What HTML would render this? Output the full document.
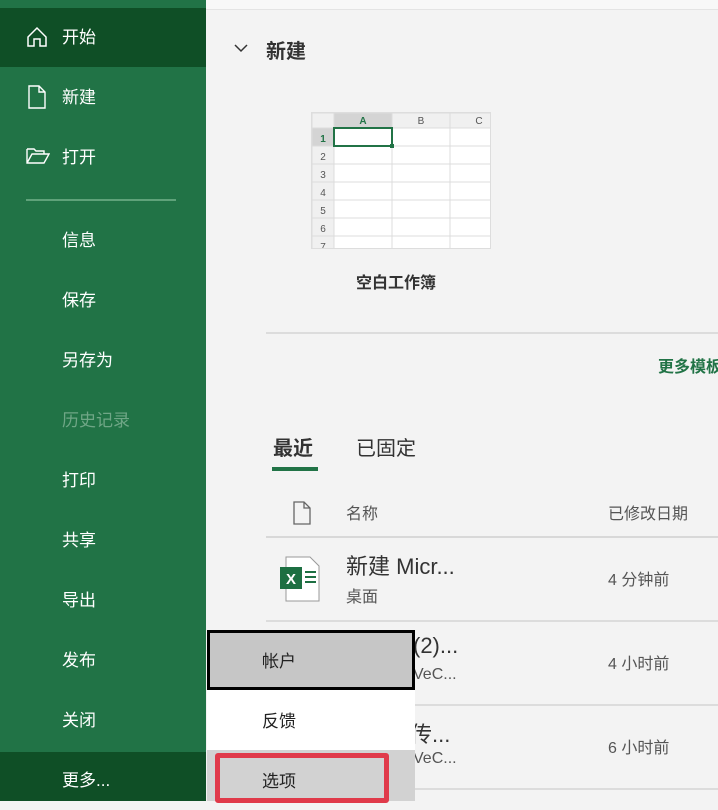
<!DOCTYPE html>
<html><head><meta charset="utf-8"><style>
*{margin:0;padding:0;box-sizing:border-box}
body{width:718px;height:801px;overflow:hidden;background:#f3f3f3;font-family:"Liberation Sans","Noto Sans CJK SC",sans-serif;position:relative}
.side{position:absolute;left:0;top:0;width:206px;height:801px;background:#217346}
.it{position:absolute;left:0;width:206px;height:60px;color:#fff;font-size:17px;line-height:62px;padding-left:62px}
.dark{background:#0f4f26}
.ic{position:absolute;left:26px;top:18px}
.a{position:absolute}
</style></head><body>
<div class="a" style="left:206px;top:0;width:512px;height:10px;background:#f8f8f8;border-bottom:1px solid #e4e4e4"></div>
<div class="side">
<div class="it dark" style="top:8px;height:59px;line-height:59px"><svg class="ic" width="22" height="22" viewBox="0 0 22 22" fill="none" stroke="#fff" stroke-width="1.5"><path d="M2 11L11 2L20 11V20H14V13H8V20H2Z"/></svg>开始</div>
<div class="it" style="top:67px"><svg class="ic" width="22" height="24" viewBox="0 0 22 24" fill="none" stroke="#fff" stroke-width="1.4"><path d="M3 1H13L19 7V23H3Z M13 1V7H19"/></svg>新建</div>
<div class="it" style="top:127px"><svg class="ic" width="24" height="22" viewBox="0 0 24 22" fill="none" stroke="#fff" stroke-width="1.4"><path d="M1 4H8L10 6H18V9 M1 4V18H18L23 9H6L1 18"/></svg>打开</div>
<div class="a" style="left:26px;top:199px;width:150px;height:2px;background:#5fa27a"></div>
<div class="it" style="top:210px">信息</div>
<div class="it" style="top:270px">保存</div>
<div class="it" style="top:330px">另存为</div>
<div class="it" style="top:390px;color:#6fa686">历史记录</div>
<div class="it" style="top:450px">打印</div>
<div class="it" style="top:510px">共享</div>
<div class="it" style="top:570px">导出</div>
<div class="it" style="top:630px">发布</div>
<div class="it" style="top:690px">关闭</div>
<div class="it dark" style="top:752px;height:49px;line-height:58px">更多...</div>
</div>
<svg class="a" style="left:233px;top:42px" width="16" height="12" viewBox="0 0 16 12" fill="none" stroke="#333" stroke-width="1.5"><path d="M2 3L8 9L14 3"/></svg>
<div class="a" style="left:266px;top:35px;font-size:20px;font-weight:bold;color:#333">新建</div>
<div class="a" style="left:311px;top:112px;width:180px;height:137px;background:#fff;border:1px solid #ddd;overflow:hidden">
<svg width="180" height="137" viewBox="0 0 180 137"><g stroke="#dcdcdc" fill="none">
<rect x="0" y="0" width="22" height="137" fill="#f0f0f0"/><rect x="0" y="0" width="180" height="15" fill="#f0f0f0"/><rect x="22" y="0" width="58" height="15" fill="#d4d4d4"/><rect x="0" y="15" width="22" height="18" fill="#d4d4d4"/>
<path d="M22 0V137M80 0V137M138 0V137M0 15H180M0 33H180M0 51H180M0 69H180M0 87H180M0 105H180M0 123H180"/></g>
<rect x="22" y="15" width="58" height="18" fill="none" stroke="#217346" stroke-width="2"/><rect x="78" y="31" width="4" height="4" fill="#217346"/>
<g font-size="10" fill="#555" text-anchor="middle" font-family="Liberation Sans"><text x="51" y="11" fill="#217346" font-weight="bold">A</text><text x="109" y="11">B</text><text x="167" y="11">C</text><text x="11" y="29" fill="#217346" font-weight="bold">1</text><text x="11" y="47">2</text><text x="11" y="65">3</text><text x="11" y="83">4</text><text x="11" y="101">5</text><text x="11" y="119">6</text><text x="11" y="137">7</text></g></svg></div>
<div class="a" style="left:356px;top:269px;font-size:16px;font-weight:bold;color:#333">空白工作簿</div>
<div class="a" style="left:266px;top:332px;width:452px;height:2px;background:#dcdcdc"></div>
<div class="a" style="left:658px;top:353px;font-size:16px;font-weight:bold;color:#217346;white-space:nowrap">更多模板</div>
<div class="a" style="left:273px;top:432px;font-size:20px;font-weight:bold;color:#333">最近</div>
<div class="a" style="left:272px;top:467px;width:46px;height:4px;background:#217346"></div>
<div class="a" style="left:356px;top:432px;font-size:20px;color:#333">已固定</div>
<svg class="a" style="left:292px;top:501px" width="20" height="24" viewBox="0 0 20 24" fill="none" stroke="#666" stroke-width="1.3"><path d="M2 1H12L18 7V23H2Z M12 1V7H18"/></svg>
<div class="a" style="left:346px;top:500px;font-size:16px;color:#555">名称</div>
<div class="a" style="left:608px;top:500px;font-size:16px;color:#555">已修改日期</div>
<div class="a" style="left:266px;top:536px;width:452px;height:2px;background:#d8d8d8"></div>
<svg class="a" style="left:280px;top:556px" width="40" height="46" viewBox="0 0 40 46"><path d="M6 1H30L39 10V45H6Z" fill="#fff" stroke="#999"/><rect x="0" y="11" width="22" height="22" fill="#1d6f42"/><text x="11" y="28" fill="#fff" font-size="15" font-weight="bold" text-anchor="middle" font-family="Liberation Sans">X</text><path d="M25 16H36M25 21H36M25 26H36" stroke="#1d6f42" stroke-width="2"/></svg>
<div class="a" style="left:346px;top:549px;font-size:22px;color:#333">新建 Micr...</div>
<div class="a" style="left:346px;top:583px;font-size:16px;color:#555">桌面</div>
<div class="a" style="left:608px;top:566px;font-size:16px;color:#555">4 分钟前</div>
<div class="a" style="left:266px;top:620px;width:452px;height:2px;background:#dcdcdc"></div>
<div class="a" style="left:413px;top:633px;font-size:22px;color:#333">(2)...</div>
<div class="a" style="left:413px;top:666px;font-size:16px;color:#555">VeC...</div>
<div class="a" style="left:608px;top:650px;font-size:16px;color:#555">4 小时前</div>
<div class="a" style="left:266px;top:704px;width:452px;height:2px;background:#dcdcdc"></div>
<div class="a" style="left:410px;top:717px;font-size:22px;color:#333">传...</div>
<div class="a" style="left:413px;top:750px;font-size:16px;color:#555">VeC...</div>
<div class="a" style="left:608px;top:734px;font-size:16px;color:#555">6 小时前</div>
<div class="a" style="left:266px;top:788px;width:452px;height:2px;background:#dcdcdc"></div>
<div class="a" style="left:207px;top:630px;width:208px;height:171px;background:#fff"></div>
<div class="a" style="left:207px;top:630px;width:208px;height:60px;background:#c6c6c6;border:3px solid #000"></div>
<div class="a" style="left:262px;top:647px;font-size:17px;color:#222">帐户</div>
<div class="a" style="left:262px;top:707px;font-size:17px;color:#222">反馈</div>
<div class="a" style="left:207px;top:750px;width:208px;height:51px;background:#d2d2d2"></div>
<div class="a" style="left:215px;top:753px;width:174px;height:50px;border:5px solid #e03a4a;border-radius:3px"></div>
<div class="a" style="left:262px;top:767px;font-size:17px;color:#222">选项</div>
</body></html>
